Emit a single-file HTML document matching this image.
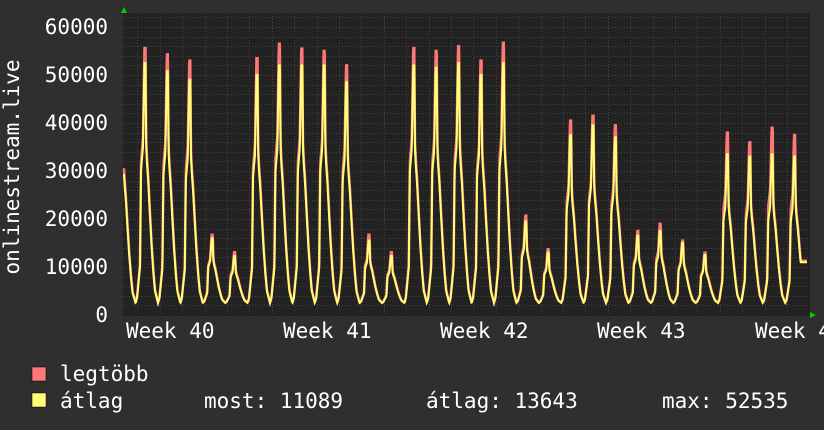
<!DOCTYPE html>
<html><head><meta charset="utf-8">
<style>
html,body{margin:0;padding:0;background:#2f2f2f;width:824px;height:430px;overflow:hidden}
svg{display:block}
text{font-family:"DejaVu Sans Mono","Liberation Mono",monospace;font-size:21px;fill:#fff}
</style></head><body>
<svg id="g" width="824" height="430" xmlns="http://www.w3.org/2000/svg">
<rect x="0" y="0" width="824" height="430" fill="#2f2f2f"/>
<rect x="123" y="13" width="687" height="303" fill="#222"/>
<g id="grid"></g>
<g id="data"></g>
<polygon points="121,13 127,13 124,7" fill="#00d000"/>
<polygon points="810,312 810,318 816,315" fill="#00d000"/>
<g text-anchor="end">
<text x="108" y="34">60000</text>
<text x="108" y="82">50000</text>
<text x="108" y="130">40000</text>
<text x="108" y="178">30000</text>
<text x="108" y="226">20000</text>
<text x="108" y="274">10000</text>
<text x="108" y="322">0</text>
</g>
<text transform="translate(19,167) rotate(-90)" text-anchor="middle">onlinestream.live</text>
<text x="126" y="338">Week 40</text>
<text x="283" y="338">Week 41</text>
<text x="440" y="338">Week 42</text>
<text x="597" y="338">Week 43</text>
<text x="755" y="338">Week 44</text>
<rect x="32" y="367" width="14" height="14" fill="#ff7777" stroke="#000" stroke-width="0.5"/>
<rect x="32" y="393" width="14" height="14" fill="#ffff77" stroke="#000" stroke-width="0.5"/>
<text x="60" y="381">legtöbb</text>
<text x="60" y="408">átlag</text>
<text x="204" y="408">most: 11089</text>
<text x="426" y="408">átlag: 13643</text>
<text x="662" y="408">max: 52535</text>
</svg>
<script>
var NS="http://www.w3.org/2000/svg";
var grid=document.getElementById('grid');
function ln(x1,y1,x2,y2,c){var l=document.createElementNS(NS,'line');l.setAttribute('x1',x1);l.setAttribute('y1',y1);l.setAttribute('x2',x2);l.setAttribute('y2',y2);l.setAttribute('stroke',c);l.setAttribute('stroke-width',1);l.setAttribute('stroke-dasharray','1,2');grid.appendChild(l);}
function Y(v){return 315-v*0.0048;}
for(var v=2000;v<=62000;v+=2000){var y=Math.round(Y(v))+0.5;ln(123,y,810,y,(v%10000==0)?'#5a3838':'#444');}
for(var k=-8;k<30;k++){var x=249.3+22.4*k;if(x<124||x>809)continue;x=Math.round(x)+0.5;var maj=Math.abs((k%7+7)%7)==0;ln(x,13,x,316,maj?'#5a3838':'#444');}
var P=[[55600,52500],[54300,50800],[53000,49000],[16700,16000],[13100,12300],[53500,50000],[56500,52000],[55500,52000],[55000,52000],[52000,48500],[16700,15500],[13100,12300],[55600,52000],[55000,51500],[56000,52500],[53000,50000],[56700,52500],[20700,19500],[13700,13000],[40500,37500],[41500,39500],[39500,37000],[17500,16500],[19000,17500],[15500,15000],[13000,12500],[38000,33500],[36000,33000],[39000,33500],[37500,33000],[30000,28000]];
var T=2500;
var prof=[[-9.4,0],[-8,0.02],[-5,0.15],[-4,0.55],[-2,0.65],[-1,0.9],[-0.5,1],[0.5,1],[1.2,0.65],[2,0.58],[3.3,0.5],[5,0.36],[6.7,0.23],[8.5,0.12],[10,0.05],[13,0]];
function f(t){for(var i=0;i<prof.length-1;i++){if(t>=prof[i][0]&&t<=prof[i+1][0]){var a=prof[i],b=prof[i+1];return a[1]+(b[1]-a[1])*(t-a[0])/(b[0]-a[0]);}}return 0;}
var avg=[],mx=[];
for(var x=124;x<=807;x+=0.25){
  var k=Math.floor((x-145+9.4)/22.4);
  var px=145+22.4*k,t=x-px;
  var p=k<0?[50000,45000]:P[Math.min(k,P.length-1)];
  var fv=f(t);
  var a=T+(p[1]-T)*fv;
  var m=a*1.04;
  if(t>=-4&&t<=0.8){m=T+(p[0]-T)*fv;}
  if(k>=29&&t>0){a=Math.max(a,11000);m=Math.max(m,11300);}
  avg.push(x+','+Y(a).toFixed(1));mx.push(x+','+Y(m).toFixed(1));
}
var d=document.getElementById('data');
function pl(pts,c,w){var p=document.createElementNS(NS,'polyline');p.setAttribute('points',pts.join(' '));p.setAttribute('fill','none');p.setAttribute('stroke',c);p.setAttribute('stroke-width',w);d.appendChild(p);}
pl(mx,'#ff7777',2.5);pl(avg,'#ffff77',2);
</script>
</body></html>
